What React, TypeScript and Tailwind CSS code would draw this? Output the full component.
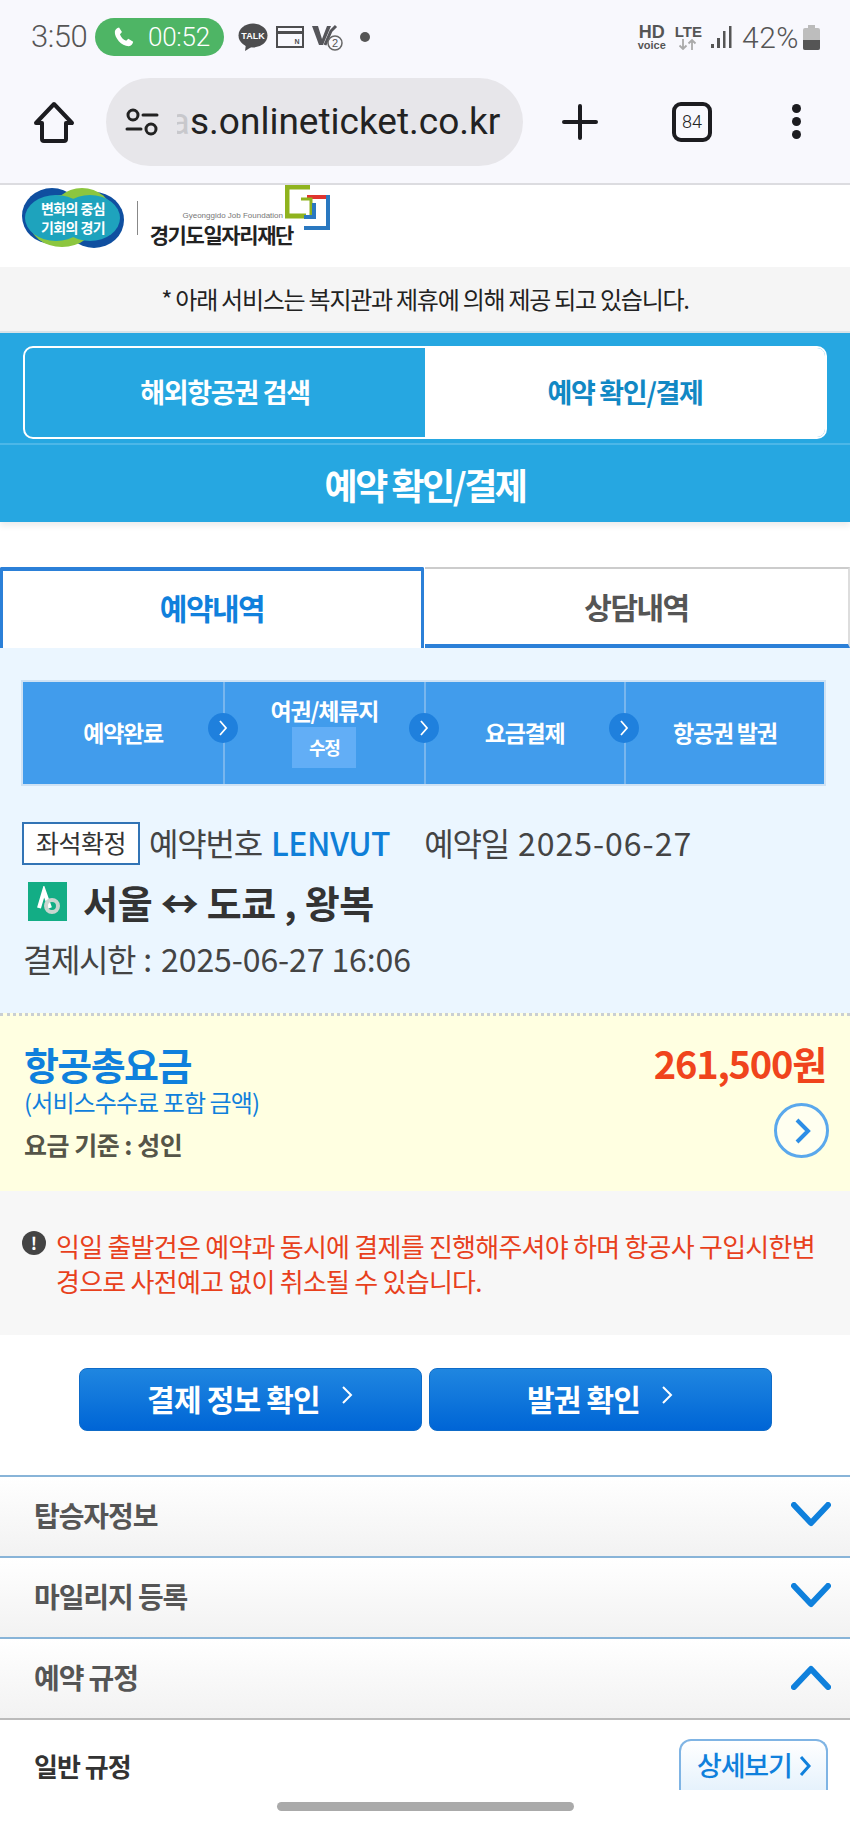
const Chevron = ({ up }: { up?: boolean }) => (
  <svg width="40" height="26" viewBox="0 0 40 26" fill="none" className="shrink-0">
    <path
      d={up ? "M3 23L20 5l17 18" : "M3 3l17 18L37 3"}
      stroke="#0f80dc"
      strokeWidth="6"
      strokeLinecap="round"
      strokeLinejoin="round"
    />
  </svg>
);

const StatusBar = () => (
  <div className="flex items-center h-[76px] pl-[31px] pr-[30px] pb-[2px]">
    <span className="font-['Roboto',sans-serif] font-light text-[31px] text-[#555] tracking-[-0.5px]">3:50</span>
    <div className="flex items-center ml-[8px] w-[129px] h-[38px] rounded-full bg-[#4eb565] text-white pl-[18px]">
      <svg width="22" height="22" viewBox="0 0 24 24" fill="#fff">
        <path d="M6.6 1.5l3.2 5-2.2 2.4c.9 3 3.5 5.900 6.800 7.300l2.300-2.200 5.300 3.200c-.3 2.400-2.300 4.800-4.800 4.800C9 22 1.500 12.500 2 6.200 2.200 3.800 4.200 2 6.600 1.500z" />
      </svg>
      <span className="ml-[13px] font-['Roboto',sans-serif] font-light text-[26px] leading-none tracking-[-0.3px]">00:52</span>
    </div>
    <svg width="30" height="29" viewBox="0 0 30 29" className="ml-[14px]">
      <ellipse cx="15" cy="12.500" rx="14.500" ry="12" fill="#4d4d4f" />
      <path d="M8 21l-1 7 8-5z" fill="#4d4d4f" />
      <text x="15" y="16" textAnchor="middle" fontSize="9" fontWeight="700" fill="#fff" fontFamily="Liberation Sans">TALK</text>
    </svg>
    <svg width="28" height="23" viewBox="0 0 28 23" fill="none" className="ml-[8px]">
      <rect x="1" y="1" width="26" height="20" stroke="#4d4d4f" strokeWidth="2" />
      <rect x="1" y="5" width="26" height="3" fill="#4d4d4f" />
      <text x="21" y="18" textAnchor="middle" fontSize="7" fontWeight="700" fill="#4d4d4f" fontFamily="Liberation Sans">N</text>
    </svg>
    <svg width="32" height="28" viewBox="0 0 32 28" fill="none" className="ml-[7px]">
      <path d="M1 3h6l4 13L16 3h4l-8 19H8z" fill="#55555a" />
      <path d="M14 22l6-14 5-5" stroke="#55555a" strokeWidth="3" />
      <circle cx="24" cy="20" r="7" stroke="#666" strokeWidth="1.500" fill="#f8f8fd" />
      <text x="24" y="24" textAnchor="middle" fontSize="11" fill="#555" fontFamily="Liberation Sans">2</text>
    </svg>
    <span className="ml-[17px] w-[10px] h-[10px] rounded-full bg-[#555]" />
    <div className="ml-auto flex items-center">
      <div className="flex flex-col items-center font-['Liberation_Sans',sans-serif] font-bold text-[#555] leading-none">
        <span className="text-[18px] leading-[15px]">HD</span>
        <span className="text-[11px] leading-[10px]">voice</span>
      </div>
      <div className="flex flex-col items-center ml-[9px] font-['Liberation_Sans',sans-serif] font-bold text-[#555] leading-none">
        <span className="text-[15px] leading-[14px]">LTE</span>
        <svg width="20" height="11" viewBox="0 0 20 11" fill="none" stroke="#aaa" strokeWidth="1.800">
          <path d="M5 0v10M1.500 6.500L5 10l3.500-3.500M14 11V1M10.500 4.500L14 1l3.500 3.500" />
        </svg>
      </div>
      <svg width="22" height="24" viewBox="0 0 22 24" fill="#555" className="ml-[9px]">
        <rect x="0" y="19" width="3" height="4" />
        <rect x="6" y="13" width="3" height="10" />
        <rect x="12" y="6" width="2.500" height="17" />
        <rect x="18" y="1" width="2.500" height="22" />
      </svg>
      <span className="ml-[9px] font-['Roboto',sans-serif] font-light text-[30px] text-[#555] tracking-[0.5px]">42%</span>
      <svg width="17" height="25" viewBox="0 0 17 25" className="ml-[4px]">
        <rect x="5" y="0" width="7" height="3" fill="#bbb" />
        <rect x="0" y="3" width="17" height="22" rx="2" fill="#bdbdbd" />
        <path d="M0 15h17v8a2 2 0 0 1-2 2H2a2 2 0 0 1-2-2z" fill="#555" />
      </svg>
    </div>
  </div>
);

const BrowserBar = () => (
  <div className="flex items-center h-[109px] pb-[16px] pl-[33px] border-b-[2px] border-[#dcdce0]">
    <svg width="42" height="42" viewBox="0 0 42 42" fill="none" stroke="#1c1c20" strokeWidth="4" strokeLinejoin="round" strokeLinecap="round">
      <path d="M3 22L21 3l18 19h-6v16a2 2 0 0 1-2 2H11a2 2 0 0 1-2-2V22z" />
    </svg>
    <div className="flex items-center ml-[31px] w-[417px] h-[88px] rounded-full bg-[#e7e6ea] pl-[19px] overflow-hidden">
      <svg width="34" height="28" viewBox="0 0 34 28" fill="none" stroke="#222" strokeWidth="3">
        <circle cx="8" cy="7" r="5" />
        <path d="M18 7h14M2 21h14" strokeLinecap="round" />
        <circle cx="26" cy="21" r="5" />
      </svg>
      <span className="ml-[18px] w-[13px] overflow-hidden text-[37px] text-[#c8c8cc] font-['Roboto',sans-serif] flex justify-end">a</span>
      <span className="text-[37px] text-[#222] font-['Roboto',sans-serif]">s.onlineticket.co.kr</span>
    </div>
    <svg width="36" height="36" viewBox="0 0 36 36" stroke="#1c1c20" strokeWidth="4" strokeLinecap="round" className="ml-[39px]">
      <path d="M18 2v32M2 18h32" />
    </svg>
    <div className="flex items-center justify-center ml-[74px] w-[40px] h-[40px] rounded-[9px] border-[4px] border-[#1c1c20] text-[18px] font-['Roboto',sans-serif] font-light text-[#222]">
      84
    </div>
    <div className="flex flex-col gap-[4px] ml-[80px]">
      <span className="w-[9px] h-[9px] rounded-full bg-[#1c1c20]" />
      <span className="w-[9px] h-[9px] rounded-full bg-[#1c1c20]" />
      <span className="w-[9px] h-[9px] rounded-full bg-[#1c1c20]" />
    </div>
  </div>
);

const LogoHeader = () => (
  <div className="flex items-center h-[82px] bg-white pl-[22px] pb-[16px]">
    <div className="relative w-[102px] h-[60px] shrink-0">
      <svg width="102" height="60" viewBox="0 0 102 60" className="absolute inset-0">
        <ellipse cx="30" cy="28" rx="30" ry="28" fill="#0f4fa0" />
        <ellipse cx="72" cy="32" rx="30" ry="28" fill="#0f4fa0" />
        <ellipse cx="60" cy="26" rx="30" ry="26" fill="#8cc63f" />
        <ellipse cx="40" cy="33" rx="33" ry="26" fill="#8cc63f" />
        <ellipse cx="34" cy="30" rx="31" ry="23" fill="#1ea3bd" />
        <ellipse cx="68" cy="30" rx="30" ry="23" fill="#1ea3bd" />
      </svg>
      <div className="relative flex flex-col items-center justify-center h-full text-white font-bold text-[14px] leading-[19px] tracking-[-0.6px]">
        <span>변화의 중심</span>
        <span>기회의 경기</span>
      </div>
    </div>
    <span className="ml-[13px] w-[1px] h-[34px] bg-[#888]" />
    <div className="flex flex-col items-end ml-[11px] mt-[20px] w-[144px] shrink-0 leading-none whitespace-nowrap">
      <span className="text-[8px] text-[#777] font-['Liberation_Sans',sans-serif] mr-[10px]">Gyeonggido Job Foundation</span>
      <span className="text-[21px] font-bold text-[#222] tracking-[-1.400px] mt-[4px]">경기도일자리재단</span>
    </div>
    <svg width="46" height="48" viewBox="0 0 46 48" fill="none" className="-ml-[8px] -mt-[18px] shrink-0">
      <path d="M25 2H2v29h19" stroke="#8fb31e" strokeWidth="5" />
      <path d="M22 12h21" stroke="#e0342e" strokeWidth="4" />
      <path d="M16 14h10v16" stroke="#8fb31e" strokeWidth="3" />
      <path d="M43 10v33H19M29 18v14h-10" stroke="#2a78c0" strokeWidth="4" />
    </svg>
  </div>
);

const STEPS = ["예약완료", "여권/체류지", "요금결제", "항공권 발권"];

const Steps = () => (
  <div className="relative grid grid-cols-4 w-[805px] h-[106px] ml-[21px] bg-[#419cec] border-[2px] border-[#cfe2f4]">
    {STEPS.map((s, i) => (
      <div
        key={s}
        className={`relative flex flex-col items-center justify-center text-white font-bold text-[23px] tracking-[-1.200px] ${i ? "border-l-[2px] border-[#78b6ee]" : ""}`}
      >
        <span className={i === 1 ? "leading-[28px] mt-[-14px]" : "leading-[28px] mt-[-2px]"}>{s}</span>
        {i === 1 && (
          <span className="flex items-center justify-center w-[64px] h-[41px] mt-[3px] mb-[-12px] bg-[#62aef6] text-[18px]">수정</span>
        )}
        {i < 3 && (
          <span className="absolute right-[-15px] top-[31px] z-10 flex items-center justify-center w-[30px] h-[30px] rounded-full bg-[#1f80dd]">
            <svg width="10" height="18" viewBox="0 0 10 18" fill="none" stroke="#fff" strokeWidth="1.800">
              <path d="M2 2l6 7-6 7" />
            </svg>
          </span>
        )}
      </div>
    ))}
  </div>
);

const ACCORDION = [
  { label: "탑승자정보" },
  { label: "마일리지 등록" },
  { label: "예약 규정", up: true },
];

export default function App() {
  return (
    <div className="relative w-[850px] h-[1823px] overflow-hidden bg-white font-['Noto_Sans_CJK_KR','Noto_Sans',sans-serif]">
      <div className="bg-[#f8f8fd]">
        <StatusBar />
        <BrowserBar />
      </div>
      <LogoHeader />

      <div className="flex items-center justify-center h-[64px] bg-[#f5f5f5] text-[24px] text-[#222] tracking-[-1.250px]">
        * 아래 서비스는 복지관과 제휴에 의해 제공 되고 있습니다.
      </div>

      <div className="bg-[#26a7e1] pt-[13px] border-t-[2px] border-[#d8e3e8] shadow-[0_4px_6px_rgba(0,0,0,0.08)]">
        <div className="flex h-[93px] mx-[23px] rounded-[10px] border-[2px] border-white overflow-hidden text-[27px] font-bold tracking-[-1.300px]">
          <div className="flex flex-1 items-center justify-center text-white">해외항공권 검색</div>
          <div className="flex flex-1 items-center justify-center bg-white text-[#1188c4]">예약 확인/결제</div>
        </div>
        <div className="flex items-center justify-center h-[79px] mt-[4px] border-t-[2px] border-[#4cb7e8] text-[36px] font-bold text-white tracking-[-2.500px]">
          예약 확인/결제
        </div>
      </div>

      <div className="flex h-[81px] mt-[45px] text-[30px] font-bold tracking-[-1.500px]">
        <div className="flex w-[424px] items-center justify-center pb-[4px] border-t-[4px] border-x-[3px] border-[#2b80d8] rounded-t-[2px] text-[#1080dc]">예약내역</div>
        <div className="flex flex-1 items-center justify-center ml-[1px] border-t-[2px] border-r-[2px] border-b-[4px] border-t-[#ccc] border-r-[#ddd] border-b-[#2b80d8] text-[#555]">상담내역</div>
      </div>

      <div className="h-[365px] bg-[#ebf6ff] pt-[32px]">
        <Steps />
        <div className="flex items-center mt-[35px] ml-[22px] h-[42px] text-[32px] text-[#444]">
          <span className="flex items-center justify-center w-[118px] h-[43px] mt-[2px] bg-white border-[2px] border-[#3274b5] text-[25px] text-[#333] tracking-[-0.500px]">좌석확정</span>
          <span className="ml-[9px] tracking-[-1.200px]">예약번호</span>
          <span className="ml-[9px] font-medium text-[#0f7fd8] tracking-[-0.500px]">LENVUT</span>
          <span className="ml-[34px] tracking-[-1.200px]">예약일</span>
          <span className="ml-[9px] tracking-[1px]">2025-06-27</span>
        </div>
        <div className="flex items-center mt-[18px] ml-[28px] h-[40px]">
          <div className="flex items-center justify-center w-[39px] h-[39px] bg-[#13ad85]">
            <svg width="30" height="30" viewBox="0 0 30 30" fill="none" strokeWidth="4">
              <path d="M6 22L11 5l6 17" stroke="#fff" />
              <circle cx="19" cy="20" r="6" stroke="#c9d6d0" />
            </svg>
          </div>
          <span className="ml-[16px] text-[38px] font-bold text-[#333] tracking-[-0.300px]">서울 ↔ 도쿄 , 왕복</span>
        </div>
        <div className="flex items-center mt-[19px] ml-[23px] text-[32px] text-[#444] leading-[36px]">
          <span className="tracking-[-1.400px]">결제시한</span>
          <span className="ml-[8px]">:</span>
          <span className="ml-[9px] tracking-[-0.100px]">2025-06-27 16:06</span>
        </div>
      </div>

      <div className="relative h-[178px] pt-[26px] pl-[24px] bg-[#ffffe1] border-t-[3px] border-dotted border-[#c9cfd3]">
        <div className="text-[38px] leading-[44px] font-bold text-[#0f80dc] tracking-[-1.600px]">항공총요금</div>
        <div className="text-[24px] leading-[30px] text-[#0f80dc] tracking-[-0.900px] mt-[1px]">(서비스수수료 포함 금액)</div>
        <div className="text-[25px] leading-[32px] font-bold text-[#555548] tracking-[-0.500px] mt-[11px]">요금 기준 : 성인</div>
        <div className="absolute right-[24px] top-[25px] text-[38px] leading-[44px] font-bold text-[#f0441c] tracking-[-1.200px]">261,500원</div>
        <div className="absolute right-[21px] top-[87px] flex items-center justify-center w-[55px] h-[55px] rounded-full border-[3px] border-[#5aa8ec] bg-[#fffff0]">
          <svg width="20" height="30" viewBox="0 0 20 30" fill="none" stroke="#2d8ee6" strokeWidth="4">
            <path d="M5 4l11 11L5 26" />
          </svg>
        </div>
      </div>

      <div className="flex h-[144px] bg-[#f7f7f7] pt-[37px] pl-[22px] pr-[24px]">
        <span className="flex items-center justify-center shrink-0 w-[24px] h-[24px] mt-[3px] rounded-full bg-[#444] text-white text-[17px] font-bold">!</span>
        <p className="ml-[10px] text-[26px] leading-[35px] text-[#e8401c] tracking-[-0.750px] break-all">
          익일 출발건은 예약과 동시에 결제를 진행해주셔야 하며 항공사 구입시한변경으로 사전예고 없이 취소될 수 있습니다.
        </p>
      </div>

      <div className="flex gap-[7px] h-[140px] pt-[33px] pl-[79px]">
        <div className="flex items-center justify-center w-[343px] h-[63px] rounded-[8px] border border-[#0e6bc8] bg-gradient-to-b from-[#1f86e0] to-[#0065d6] text-white text-[30px] font-bold tracking-[-0.800px] pb-[2px]">
          결제 정보 확인
          <svg width="14" height="22" viewBox="0 0 14 22" fill="none" stroke="#fff" strokeWidth="2" className="ml-[20px] mb-[8px]">
            <path d="M3 3l8 8-8 8" />
          </svg>
        </div>
        <div className="flex items-center justify-center w-[343px] h-[63px] rounded-[8px] border border-[#0e6bc8] bg-gradient-to-b from-[#1f86e0] to-[#0065d6] text-white text-[30px] font-bold tracking-[-0.800px] pb-[2px]">
          발권 확인
          <svg width="14" height="22" viewBox="0 0 14 22" fill="none" stroke="#fff" strokeWidth="2" className="ml-[20px] mb-[8px]">
            <path d="M3 3l8 8-8 8" />
          </svg>
        </div>
      </div>

      {ACCORDION.map((a) => (
        <div
          key={a.label}
          className="flex items-center justify-between h-[81px] pl-[34px] pr-[19px] pb-[4px] border-t-[2px] border-[#88b4d8] bg-gradient-to-b from-white to-[#f2f2f2] text-[28px] font-bold text-[#555] tracking-[-1.100px]"
        >
          {a.label}
          <Chevron up={a.up} />
        </div>
      ))}

      <div className="flex items-start justify-between h-[70px] pl-[34px] pr-[22px] pt-[19px] border-t-[2px] border-[#bbb]">
        <span className="mt-[10px] text-[26px] leading-[34px] font-bold text-[#333] tracking-[-1px]">일반 규정</span>
        <div className="flex items-center w-[149px] h-[51px] pl-[16px] rounded-t-[12px] border-t-[2px] border-x-[2px] border-[#7fb4e4] bg-gradient-to-b from-white to-[#e6f2fc] text-[27px] font-medium text-[#0f80dc] tracking-[-1.200px]">
          상세보기
          <svg width="14" height="24" viewBox="0 0 14 24" fill="none" stroke="#0f80dc" strokeWidth="3" className="ml-[6px]">
            <path d="M3 3l8 9-8 9" />
          </svg>
        </div>
      </div>

      {/* gesture bar sits on top of the cut-off page */}
      <div className="absolute left-0 right-0 bottom-0 h-[33px] bg-white">
        <div className="absolute left-[277px] top-[12px] w-[297px] h-[9px] rounded-full bg-[#aaa]" />
      </div>
    </div>
  );
}
